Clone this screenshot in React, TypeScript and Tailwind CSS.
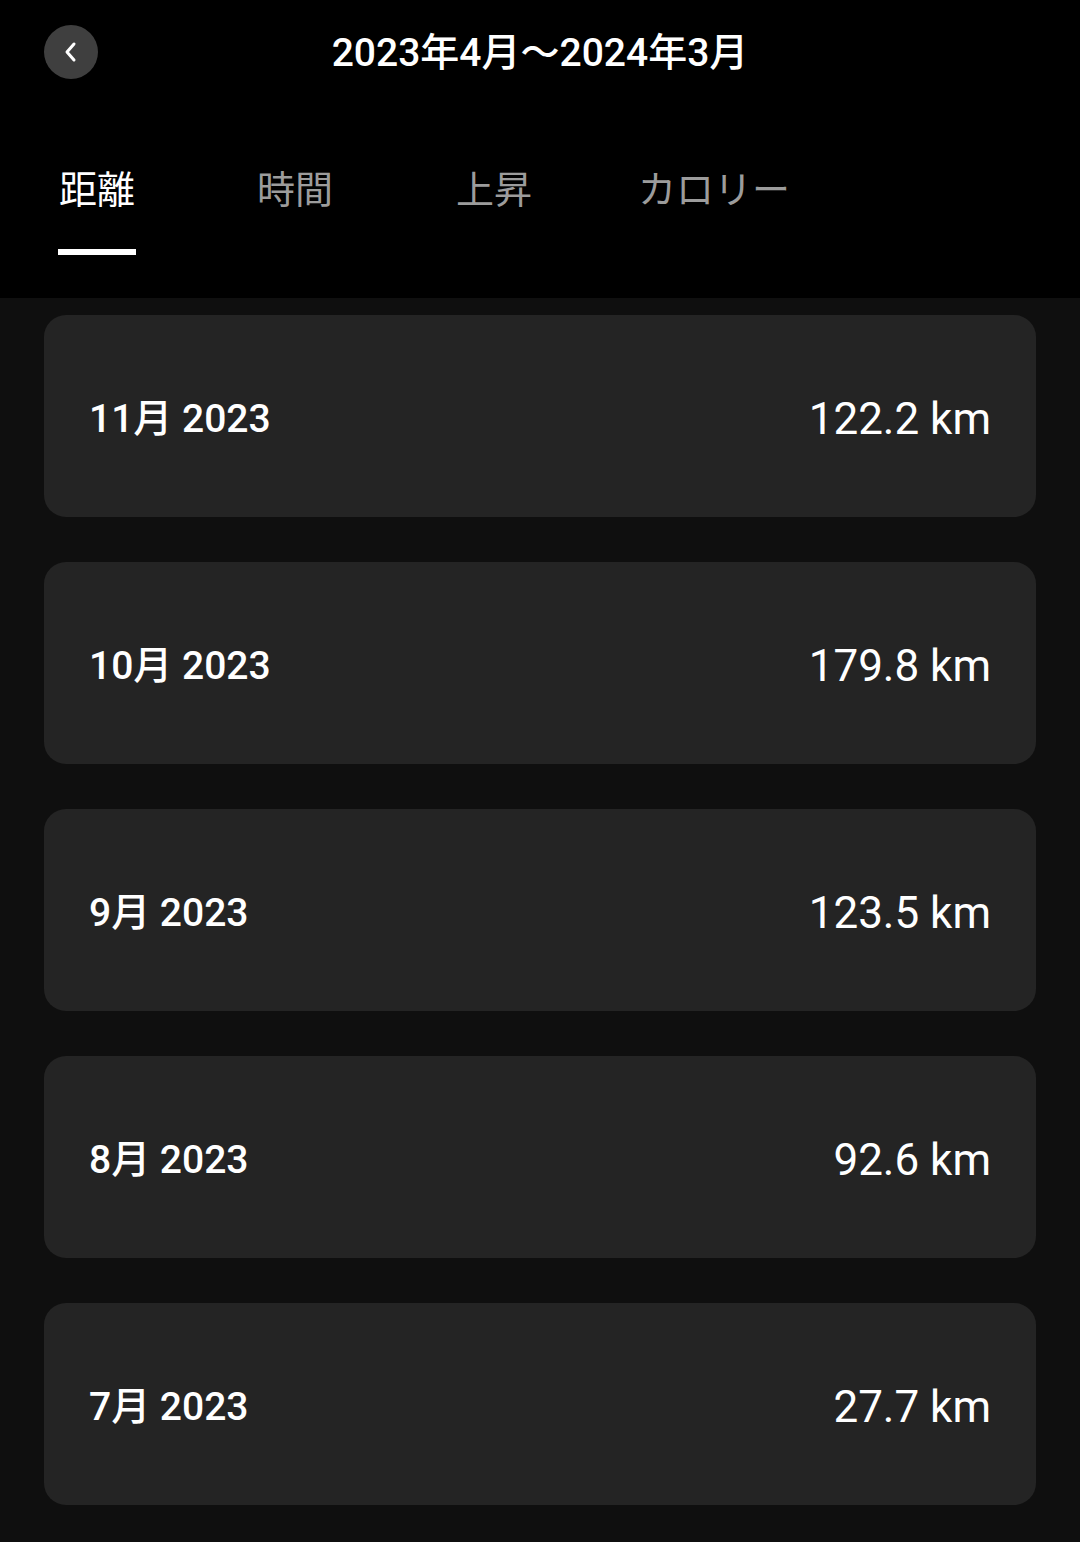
import React from "react";

const months = [
  { label: "11月 2023", value: "122.2 km" },
  { label: "10月 2023", value: "179.8 km" },
  { label: "9月 2023", value: "123.5 km" },
  { label: "8月 2023", value: "92.6 km" },
  { label: "7月 2023", value: "27.7 km" },
];

const tabs = [
  { name: "距離", gap: "ml-[14px]" },
  { name: "時間", gap: "ml-[121px]" },
  { name: "上昇", gap: "ml-[123px]" },
  { name: "カロリー", gap: "ml-[106px]" },
];

function BackButton() {
  return (
    <button
      type="button"
      className="flex h-[54px] w-[54px] items-center justify-center rounded-full bg-[#3f3f3f]"
    >
      <svg width="20" height="22" viewBox="0 0 20 22" fill="none">
        <path d="M13 3 L6 11 L13 19" stroke="#ffffff" strokeWidth="3" strokeLinecap="round" strokeLinejoin="round" />
      </svg>
    </button>
  );
}

export default function App() {
  return (
    <div
      className="min-h-[1542px] w-[1080px] bg-[#0f0f0f] text-white"
      style={{ fontFamily: 'Roboto, "Noto Sans CJK JP", sans-serif' }}
    >
      <header className="bg-black px-[44px] pb-[43px]">
        <div className="relative flex h-[104px] items-center">
          <BackButton />
          <h1 className="absolute left-1/2 top-[34px] -translate-x-1/2 text-[39px] font-medium leading-none whitespace-nowrap">
            2023年4月～2024年3月
          </h1>
        </div>
        <nav className="flex">
          {tabs.map((t, i) => (
            <div key={t.name} className={"flex flex-col items-center " + t.gap}>
              <span
                className={
                  i === 0
                    ? "mt-[64px] text-[38px] leading-[44px] text-white"
                    : "mt-[64px] text-[38px] leading-[44px] text-[#9c9c9c]"
                }
              >
                {t.name}
              </span>
              {i === 0 ? (
                <div className="mt-[37px] h-[6px] w-[78px] bg-white" />
              ) : (
                <div className="mt-[37px] h-[6px]" />
              )}
            </div>
          ))}
        </nav>
      </header>

      <main className="flex flex-col gap-[45px] px-[44px] pt-[17px] pb-[36px]">
        {months.map((m) => (
          <div
            key={m.label}
            className="flex h-[202px] items-center justify-between rounded-[22px] bg-[#242424] px-[45px] pt-[6px]"
          >
            <span className="text-[39px] font-medium">{m.label}</span>
            <span className="text-[44px]">{m.value}</span>
          </div>
        ))}
      </main>
    </div>
  );
}
